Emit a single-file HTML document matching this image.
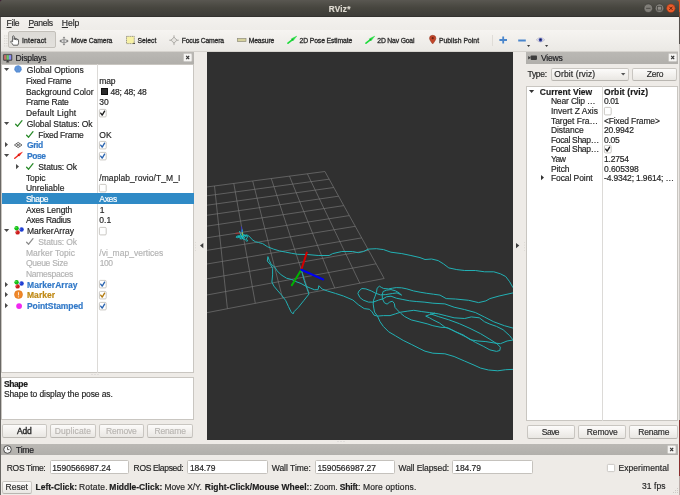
<!DOCTYPE html>
<html><head><meta charset="utf-8"><title>RViz*</title><style>html,body{margin:0;padding:0}body{width:680px;height:495px;overflow:hidden;position:relative;background:#f0eeeb;font-family:"Liberation Sans", sans-serif;-webkit-text-stroke:0.18px}u{text-decoration-thickness:.6px;text-underline-offset:1px}#all{position:absolute;left:0;top:0;width:680px;height:495px;overflow:hidden;filter:blur(0.4px)}</style></head><body><div id="all"><div style="position:absolute;left:670px;top:0px;width:10px;height:11.5px;background:#d9501e"></div><div style="position:absolute;left:670px;top:11.5px;width:10px;height:6px;background:#8a4a30"></div><div style="position:absolute;left:0px;top:0px;width:6px;height:6px;background:#3a1830"></div><div style="position:absolute;left:0px;top:0px;width:679.1px;height:17px;background:linear-gradient(#595751,#47463f 45%,#3c3b37);border-radius:2.5px 3px 0 0"></div><div style="position:absolute;left:0px;top:16.2px;width:679.1px;height:0.9px;background:#33322f"></div><svg width="40" height="17" viewBox="640 0 40 17" style="position:absolute;left:640px;top:0"><circle cx="648.3" cy="8.2" r="4.3" fill="#807e78" stroke="#3a3935" stroke-width="0.6"/><circle cx="659.5" cy="8.2" r="4.3" fill="#807e78" stroke="#3a3935" stroke-width="0.6"/><circle cx="670.9" cy="8.3" r="4.3" fill="#ec5c2c" stroke="#8a3414" stroke-width="0.6"/><path d="M646.1 8.3H650.5" stroke="#45443f" stroke-width="0.9"/><rect x="657.5" y="6.3" width="4" height="3.8" fill="#8f8d87" stroke="#45443f" stroke-width="0.75"/><path d="M669.3 6.7L672.5 9.9M672.5 6.7L669.3 9.9" stroke="#5a220c" stroke-width="1"/></svg><div style="position:absolute;left:0px;top:17.2px;width:680px;height:12.6px;background:linear-gradient(#f3f1ee,#eeece8)"></div><div style="position:absolute;left:0px;top:29.8px;width:680px;height:21.4px;background:linear-gradient(#f6f4f1,#ebe9e5)"></div><div style="position:absolute;left:0px;top:51.0px;width:680px;height:0.8px;background:#d6d3ce"></div><svg width="4" height="12" style="position:absolute;left:3.6px;top:34.5px" viewBox="0 0 4 12"><rect x="0.3" y="0.5" width="0.9" height="0.9" fill="#c9c6c0"/><rect x="0.3" y="3" width="0.9" height="0.9" fill="#c9c6c0"/><rect x="0.3" y="5.5" width="0.9" height="0.9" fill="#c9c6c0"/><rect x="0.3" y="8" width="0.9" height="0.9" fill="#c9c6c0"/><rect x="0.3" y="10.5" width="0.9" height="0.9" fill="#c9c6c0"/><rect x="2.4" y="0.5" width="0.9" height="0.9" fill="#c9c6c0"/><rect x="2.4" y="3" width="0.9" height="0.9" fill="#c9c6c0"/><rect x="2.4" y="5.5" width="0.9" height="0.9" fill="#c9c6c0"/><rect x="2.4" y="8" width="0.9" height="0.9" fill="#c9c6c0"/><rect x="2.4" y="10.5" width="0.9" height="0.9" fill="#c9c6c0"/></svg><div style="position:absolute;left:8.3px;top:31.2px;width:47.3px;height:16.8px;background:linear-gradient(#dddbd7,#e3e1dd);border:0.7px solid #c3c0ba;border-radius:2px;box-sizing:border-box"></div><svg width="10" height="11" viewBox="0 0 10 11" style="position:absolute;left:10px;top:34.5px;overflow:visible"><path d="M2.6 6.2V1.6Q2.6 .8 3.4 .8Q4.2 .8 4.2 1.6V4.6V3.6Q4.2 3 4.9 3Q5.6 3 5.6 3.7V4.8V4.2Q5.6 3.6 6.3 3.6Q7 3.6 7 4.3V5.2V4.8Q7 4.3 7.7 4.3Q8.5 4.3 8.5 5.2V7.6Q8.5 9 7.8 10.2H3.2Q2.4 8.6 1 7.4Q.4 6.6 1.1 6.2Q1.8 5.9 2.6 6.8Z" fill="#fff" stroke="#3a3a3a" stroke-width="0.8" stroke-linejoin="round"/></svg><svg width="10" height="10" viewBox="0 0 10 10" style="position:absolute;left:59px;top:35.6px;overflow:visible"><path d="M5 .5L6.4 2.2H3.6ZM5 9.5L3.6 7.8H6.4ZM.3 5L2 3.6V6.4ZM9.7 5L8 6.4V3.6Z" fill="#7a7a7a"/><path d="M5 2V8M2 5H8" stroke="#8a8a8a" stroke-width="0.7"/><rect x="2.4" y="3.7" width="5.2" height="2.8" rx="0.5" fill="#dcdcdc" stroke="#777" stroke-width="0.65"/><circle cx="5" cy="5.1" r=".8" fill="#888"/></svg><svg width="9" height="8.2" viewBox="0 0 9 8.2" style="position:absolute;left:126px;top:36.2px;overflow:visible"><rect x=".5" y=".4" width="7.8" height="7.2" fill="#f7f1a5" stroke="#77756a" stroke-width="0.7" stroke-dasharray="1.2 .6"/><rect x="7.4" y="6.8" width="1.3" height="1.2" fill="#222"/></svg><svg width="10" height="10.4" viewBox="0 0 10 10.4" style="position:absolute;left:169.2px;top:35px;overflow:visible"><path d="M5 .3V10.1M.2 5.2H9.8" stroke="#9c9a96" stroke-width="0.8"/><path d="M5 2.2L8 5.2L5 8.2L2 5.2Z" fill="#e6e4e0" stroke="#9c9a96" stroke-width="0.8"/></svg><svg width="9.4" height="4" viewBox="0 0 9.4 4" style="position:absolute;left:236.6px;top:38.2px;overflow:visible"><rect x=".4" y=".4" width="8.6" height="3.2" fill="#d6d19c" stroke="#8f8d7c" stroke-width="0.7"/></svg><svg width="12" height="10" viewBox="0 0 12 10" style="position:absolute;left:286px;top:35px;overflow:visible"><path d="M2 8.2L6.2 4.8" stroke="#1fdc3c" stroke-width="1.7" stroke-linecap="round"/><path d="M7.05 5.85L5.35 3.75L10.8 1.1Z" fill="#1fdc3c" stroke="#1fdc3c" stroke-width=".4" stroke-linejoin="round"/><circle cx="6.3" cy="4.75" r=".8" fill="#11a82c"/></svg><svg width="12" height="10" viewBox="0 0 12 10" style="position:absolute;left:364px;top:35px;overflow:visible"><path d="M2 8.2L6.2 4.8" stroke="#1fdc3c" stroke-width="1.7" stroke-linecap="round"/><path d="M7.05 5.85L5.35 3.75L10.8 1.1Z" fill="#1fdc3c" stroke="#1fdc3c" stroke-width=".4" stroke-linejoin="round"/><circle cx="6.3" cy="4.75" r=".8" fill="#11a82c"/></svg><svg width="7.4" height="9.2" viewBox="0 0 7.4 9.2" style="position:absolute;left:428.6px;top:35.2px;overflow:visible"><path d="M3.7 9C3.7 9 .5 5.2 .5 3.3A3.2 3 0 0 1 6.9 3.3C6.9 5.2 3.7 9 3.7 9Z" fill="#c2452a" stroke="#8e2e18" stroke-width="0.5"/><circle cx="3.7" cy="3.2" r="1.1" fill="#6e2414"/></svg><div style="position:absolute;left:491.5px;top:35px;width:0.8px;height:10.6px;background:#dfdcd7"></div><svg width="8.6" height="8" viewBox="0 0 8.6 8" style="position:absolute;left:499px;top:36.3px;overflow:visible"><path d="M4.2 .4V7.6M.4 4H8" stroke="#4a86cc" stroke-width="1.8"/></svg><svg width="8" height="3" viewBox="0 0 8 3" style="position:absolute;left:517.8px;top:38.6px;overflow:visible"><path d="M.2 1.5H7.8" stroke="#4a86cc" stroke-width="2.0"/></svg><svg width="3.4" height="2.2" viewBox="0 0 3.4 2.2" style="position:absolute;left:526.6px;top:45px;overflow:visible"><path d="M0 0H3.2L1.6 2Z" fill="#3a3a3a"/></svg><svg width="9" height="5.6" viewBox="0 0 9 5.6" style="position:absolute;left:536px;top:37.4px;overflow:visible"><path d="M.3 2.8Q4.5 -1.6 8.7 2.8Q4.5 7.2 .3 2.8Z" fill="#e9e8f2" stroke="#a9a8b8" stroke-width="0.6"/><circle cx="4.5" cy="2.8" r="1.9" fill="#3c4aa8"/><circle cx="4.5" cy="2.8" r=".8" fill="#15183a"/></svg><svg width="3.4" height="2.2" viewBox="0 0 3.4 2.2" style="position:absolute;left:545.1px;top:45px;overflow:visible"><path d="M0 0H3.2L1.6 2Z" fill="#3a3a3a"/></svg><div style="position:absolute;left:0px;top:51.8px;width:680px;height:443.2px;background:#eeebe7"></div><div style="position:absolute;left:0px;top:17px;width:0.6px;height:478px;background:#6a6865"></div><div style="position:absolute;left:1px;top:51.5px;width:192.8px;height:12.1px;background:linear-gradient(#bab8b4,#b1afab)"></div><svg width="9.4" height="8.8" viewBox="0 0 9.4 8.8" style="position:absolute;left:3.2px;top:53.6px;overflow:visible"><rect x=".4" y=".4" width="8.6" height="6" rx=".6" fill="#444" stroke="#333" stroke-width=".5"/><rect x="1.1" y="1.1" width="2.4" height="4.6" fill="#c86a6a"/><rect x="3.5" y="1.1" width="2.4" height="4.6" fill="#6ac86a"/><rect x="5.9" y="1.1" width="2.4" height="4.6" fill="#8c8cf0"/><path d="M3.2 7.9H6.2M4.7 6.6V7.8" stroke="#222" stroke-width=".9"/></svg><svg width="9.4" height="9" viewBox="0 0 9.4 9" style="position:absolute;left:183.4px;top:52.599999999999994px;overflow:visible"><rect x=".35" y=".35" width="8.7" height="8.3" rx="1.3" fill="#f5f4f2" stroke="#bcb9b4" stroke-width=".7"/><path d="M3.2 2.9L6.2 6.1M6.2 2.9L3.2 6.1" stroke="#333" stroke-width="1.15"/></svg><div style="position:absolute;left:1.2px;top:63.7px;width:192.60000000000002px;height:309.3px;background:#fff;border:0.6px solid #c9c6c1;box-sizing:border-box"></div><div style="position:absolute;left:97.3px;top:63.7px;width:0.7px;height:309.3px;background:#dcdad7"></div><div style="position:absolute;left:1.5px;top:193.4px;width:192px;height:10.6px;background:#2f8ac6"></div><svg width="5.2" height="3.2" viewBox="0 0 5.2 3.2" style="position:absolute;left:3.6999999999999997px;top:68.31px;overflow:visible"><path d="M0 0H5.2L2.6 3.1Z" fill="#4a4a4a"/></svg><svg width="8" height="8" viewBox="0 0 8 8" style="position:absolute;left:14.3px;top:65.21px;overflow:visible"><circle cx="4" cy="4" r="3.35" fill="#5d92d8" stroke="#4d84cc" stroke-width=".9" stroke-dasharray="1.05 .5"/><circle cx="4" cy="4" r="2.1" fill="#78a8e4"/><path d="M1.9 4H6.1M4 1.9V6.1M2.5 3H5.5M2.5 5H5.5" stroke="#4178c0" stroke-width=".4"/></svg><div style="position:absolute;left:100.6px;top:88.25px;width:7px;height:6.6px;background:#2c2c2c;border:.5px solid #111;box-sizing:border-box"></div><svg width="7.6" height="8.3" viewBox="0 0 7.6 8.3" style="position:absolute;left:99.10000000000001px;top:108.78999999999999px;overflow:visible"><rect x=".4" y=".4" width="6.8" height="7.5" rx="1" fill="#fff" stroke="#bdbab5" stroke-width=".8"/><path d="M1.7 4.1L3.2 6.1L5.6 2.1" fill="none" stroke="#1c1c1c" stroke-width="1.35" stroke-linecap="round" stroke-linejoin="round"/></svg><svg width="5.2" height="3.2" viewBox="0 0 5.2 3.2" style="position:absolute;left:3.6999999999999997px;top:121.91px;overflow:visible"><path d="M0 0H5.2L2.6 3.1Z" fill="#4a4a4a"/></svg><svg width="7.6" height="7" viewBox="0 0 7.6 7" style="position:absolute;left:15px;top:120.11px;overflow:visible"><path d="M.6 4.2L2.6 6.2L7 .7" fill="none" stroke="#2a8a2a" stroke-width="1.3" stroke-linecap="round" stroke-linejoin="round"/></svg><svg width="7.6" height="7" viewBox="0 0 7.6 7" style="position:absolute;left:26.2px;top:130.83px;overflow:visible"><path d="M.6 4.2L2.6 6.2L7 .7" fill="none" stroke="#2a8a2a" stroke-width="1.3" stroke-linecap="round" stroke-linejoin="round"/></svg><svg width="3.2" height="5.2" viewBox="0 0 3.2 5.2" style="position:absolute;left:5.1px;top:142.25000000000003px;overflow:visible"><path d="M0 0V5.2L3 2.6Z" fill="#4a4a4a"/></svg><svg width="8.4" height="6" viewBox="0 0 8.4 6" style="position:absolute;left:14.4px;top:142.15000000000003px;overflow:visible"><path d="M4.2 .4L8 3L4.2 5.6L.4 3Z" fill="#f4f4f4" stroke="#3c3c3c" stroke-width=".75"/><path d="M2.3 1.7L6.1 4.3M6.1 1.7L2.3 4.3" stroke="#3c3c3c" stroke-width=".65"/></svg><svg width="7.6" height="8.3" viewBox="0 0 7.6 8.3" style="position:absolute;left:99.10000000000001px;top:140.95000000000005px;overflow:visible"><rect x=".4" y=".4" width="6.8" height="7.5" rx="1" fill="#fff" stroke="#bdbab5" stroke-width=".8"/><path d="M1.7 4.1L3.2 6.1L5.6 2.1" fill="none" stroke="#2a64b0" stroke-width="1.35" stroke-linecap="round" stroke-linejoin="round"/></svg><svg width="5.2" height="3.2" viewBox="0 0 5.2 3.2" style="position:absolute;left:3.6999999999999997px;top:154.07000000000002px;overflow:visible"><path d="M0 0H5.2L2.6 3.1Z" fill="#4a4a4a"/></svg><svg width="10.6" height="8.8" viewBox="0 0 12 10" style="position:absolute;left:12.8px;top:150.67000000000002px;overflow:visible"><path d="M2 8.2L6.2 4.8" stroke="#f0281e" stroke-width="1.7" stroke-linecap="round"/><path d="M7.05 5.85L5.35 3.75L10.8 1.1Z" fill="#f0281e" stroke="#f0281e" stroke-width=".4" stroke-linejoin="round"/><circle cx="6.3" cy="4.75" r=".8" fill="#b4160e"/></svg><svg width="7.6" height="8.3" viewBox="0 0 7.6 8.3" style="position:absolute;left:99.10000000000001px;top:151.67000000000002px;overflow:visible"><rect x=".4" y=".4" width="6.8" height="7.5" rx="1" fill="#fff" stroke="#bdbab5" stroke-width=".8"/><path d="M1.7 4.1L3.2 6.1L5.6 2.1" fill="none" stroke="#2a64b0" stroke-width="1.35" stroke-linecap="round" stroke-linejoin="round"/></svg><svg width="3.2" height="5.2" viewBox="0 0 3.2 5.2" style="position:absolute;left:16.3px;top:163.69000000000003px;overflow:visible"><path d="M0 0V5.2L3 2.6Z" fill="#4a4a4a"/></svg><svg width="7.6" height="7" viewBox="0 0 7.6 7" style="position:absolute;left:26.2px;top:162.99000000000004px;overflow:visible"><path d="M.6 4.2L2.6 6.2L7 .7" fill="none" stroke="#2a8a2a" stroke-width="1.3" stroke-linecap="round" stroke-linejoin="round"/></svg><svg width="7.6" height="8.3" viewBox="0 0 7.6 8.3" style="position:absolute;left:99.10000000000001px;top:183.83000000000004px;overflow:visible"><rect x=".4" y=".4" width="6.8" height="7.5" rx="1" fill="#fff" stroke="#bdbab5" stroke-width=".8"/></svg><svg width="5.2" height="3.2" viewBox="0 0 5.2 3.2" style="position:absolute;left:3.6999999999999997px;top:229.11000000000004px;overflow:visible"><path d="M0 0H5.2L2.6 3.1Z" fill="#4a4a4a"/></svg><svg width="9.4" height="8.8" viewBox="0 0 9.4 8.8" style="position:absolute;left:13.6px;top:225.91000000000003px;overflow:visible"><circle cx="2.6" cy="2.3" r="2.2" fill="#12c012"/><circle cx="3.6" cy="6.4" r="2.2" fill="#cc1a1a"/><circle cx="7.6" cy="3.5" r="2.2" fill="#1e3ed2"/><circle cx="2" cy="1.7" r=".6" fill="#9f9" opacity=".8"/><circle cx="6.6" cy="3" r=".6" fill="#99f" opacity=".8"/><circle cx="2.7" cy="5.8" r=".6" fill="#f99" opacity=".8"/></svg><svg width="7.6" height="8.3" viewBox="0 0 7.6 8.3" style="position:absolute;left:99.10000000000001px;top:226.71000000000004px;overflow:visible"><rect x=".4" y=".4" width="6.8" height="7.5" rx="1" fill="#fff" stroke="#bdbab5" stroke-width=".8"/></svg><svg width="7.6" height="7" viewBox="0 0 7.6 7" style="position:absolute;left:26.2px;top:238.03000000000003px;overflow:visible"><path d="M.6 4.2L2.6 6.2L7 .7" fill="none" stroke="#8e8e8e" stroke-width="1.3" stroke-linecap="round" stroke-linejoin="round"/></svg><svg width="3.2" height="5.2" viewBox="0 0 3.2 5.2" style="position:absolute;left:5.1px;top:281.61px;overflow:visible"><path d="M0 0V5.2L3 2.6Z" fill="#4a4a4a"/></svg><svg width="9.4" height="8.8" viewBox="0 0 9.4 8.8" style="position:absolute;left:13.6px;top:279.51px;overflow:visible"><circle cx="2.6" cy="2.3" r="2.2" fill="#12c012"/><circle cx="3.6" cy="6.4" r="2.2" fill="#cc1a1a"/><circle cx="7.6" cy="3.5" r="2.2" fill="#1e3ed2"/><circle cx="2" cy="1.7" r=".6" fill="#9f9" opacity=".8"/><circle cx="6.6" cy="3" r=".6" fill="#99f" opacity=".8"/><circle cx="2.7" cy="5.8" r=".6" fill="#f99" opacity=".8"/></svg><svg width="7.6" height="8.3" viewBox="0 0 7.6 8.3" style="position:absolute;left:99.10000000000001px;top:280.31px;overflow:visible"><rect x=".4" y=".4" width="6.8" height="7.5" rx="1" fill="#fff" stroke="#bdbab5" stroke-width=".8"/><path d="M1.7 4.1L3.2 6.1L5.6 2.1" fill="none" stroke="#2a64b0" stroke-width="1.35" stroke-linecap="round" stroke-linejoin="round"/></svg><svg width="3.2" height="5.2" viewBox="0 0 3.2 5.2" style="position:absolute;left:5.1px;top:292.33000000000004px;overflow:visible"><path d="M0 0V5.2L3 2.6Z" fill="#4a4a4a"/></svg><svg width="9" height="9" viewBox="0 0 9 9" style="position:absolute;left:13.8px;top:290.13px;overflow:visible"><circle cx="4.5" cy="4.5" r="4.0" fill="#f0882a" stroke="#dc7418" stroke-width=".6"/><path d="M4.5 2.6V5" stroke="#fde8cf" stroke-width="1.0" stroke-linecap="round"/><circle cx="4.5" cy="6.8" r=".6" fill="#fde8cf"/></svg><svg width="7.6" height="8.3" viewBox="0 0 7.6 8.3" style="position:absolute;left:99.10000000000001px;top:291.03000000000003px;overflow:visible"><rect x=".4" y=".4" width="6.8" height="7.5" rx="1" fill="#fff" stroke="#bdbab5" stroke-width=".8"/><path d="M1.7 4.1L3.2 6.1L5.6 2.1" fill="none" stroke="#b27a10" stroke-width="1.35" stroke-linecap="round" stroke-linejoin="round"/></svg><svg width="3.2" height="5.2" viewBox="0 0 3.2 5.2" style="position:absolute;left:5.1px;top:303.05000000000007px;overflow:visible"><path d="M0 0V5.2L3 2.6Z" fill="#4a4a4a"/></svg><svg width="6.2" height="6.2" viewBox="0 0 6.2 6.2" style="position:absolute;left:15.5px;top:302.55000000000007px;overflow:visible"><circle cx="3.1" cy="3.1" r="2.9" fill="#f028f0"/></svg><svg width="7.6" height="8.3" viewBox="0 0 7.6 8.3" style="position:absolute;left:99.10000000000001px;top:301.75000000000006px;overflow:visible"><rect x=".4" y=".4" width="6.8" height="7.5" rx="1" fill="#fff" stroke="#bdbab5" stroke-width=".8"/><path d="M1.7 4.1L3.2 6.1L5.6 2.1" fill="none" stroke="#2a64b0" stroke-width="1.35" stroke-linecap="round" stroke-linejoin="round"/></svg><svg width="10" height="1.4" viewBox="0 0 10 1.4" style="position:absolute;left:91px;top:374.4px;overflow:visible"><circle cx="1" cy=".6" r=".5" fill="#bbb"/><circle cx="4" cy=".6" r=".5" fill="#bbb"/><circle cx="7" cy=".6" r=".5" fill="#bbb"/></svg><div style="position:absolute;left:1.2px;top:376.5px;width:192.6px;height:43.3px;background:#fff;border:0.6px solid #c9c6c1;box-sizing:border-box"></div><div style="position:absolute;left:1.7000000000000002px;top:424.1px;width:45.099999999999994px;height:13.8px;background:linear-gradient(#fcfbfa,#f1efec 60%,#e9e7e3);border:0.8px solid #c9c6c1;border-bottom-color:#b9b6b1;border-radius:2.2px;box-sizing:border-box"></div><div style="position:absolute;left:50.2px;top:424.1px;width:45.5px;height:13.8px;background:linear-gradient(#fcfbfa,#f1efec 60%,#e9e7e3);border:0.8px solid #c9c6c1;border-bottom-color:#b9b6b1;border-radius:2.2px;box-sizing:border-box"></div><div style="position:absolute;left:99.0px;top:424.1px;width:45.0px;height:13.8px;background:linear-gradient(#fcfbfa,#f1efec 60%,#e9e7e3);border:0.8px solid #c9c6c1;border-bottom-color:#b9b6b1;border-radius:2.2px;box-sizing:border-box"></div><div style="position:absolute;left:147.2px;top:424.1px;width:45.599999999999994px;height:13.8px;background:linear-gradient(#fcfbfa,#f1efec 60%,#e9e7e3);border:0.8px solid #c9c6c1;border-bottom-color:#b9b6b1;border-radius:2.2px;box-sizing:border-box"></div><div style="position:absolute;left:206.5px;top:51.55px;width:306.4px;height:388.35px;background:#303030;overflow:hidden"><div style="position:absolute;left:0.5px;top:0.45px"><svg width="306" height="388" viewBox="0 0 306 388" style="position:absolute;left:0;top:0"><path d="M117.9 119.5L177.2 226.5M117.9 119.5L-73.6 144.6M100.4 121.8L152.8 231.2M122.2 127.2L-75.4 154.0M82.5 124.2L127.7 236.0M126.8 135.5L-77.3 164.0M64.3 126.6L102.0 241.0M131.6 144.2L-79.4 174.8M45.7 129.0L75.5 246.1M136.8 153.6L-81.7 186.4M26.8 131.5L48.3 251.3M142.3 163.6L-84.1 198.9M7.5 134.0L20.4 256.7M148.3 174.3L-86.7 212.4M-12.2 136.6L-8.4 262.3M154.7 185.9L-89.6 227.1M-32.2 139.2L-37.9 268.0M161.6 198.3L-92.7 243.2M-52.7 141.9L-68.4 273.9M169.1 211.8L-96.1 260.7M-73.6 144.6L-99.8 279.9M177.2 226.5L-99.8 279.9" stroke="#7a7a7a" stroke-width="0.65" fill="none"/><path d="M41.2 183.6L43.2 185.2L45.2 187.7L48.3 189.7L51.5 190.5L55.6 191.6L60.4 194.7L66.5 197.1L72.5 198.9L78.6 200.1L84.7 201.3L90.7 202.3L100.3 202.5L111.2 203.5L122.1 203.5L125.7 201.6L134.8 199.5L145.7 199.5L151.2 200.7L156.6 199.5L161.2 197.1L169.4 196.7L176.6 197.6L183.9 200.2L194.8 201.6L203.9 203.5L213.0 205.6L218.0 207.5L224.6 207.0L231.2 208.6L236.5 211.9L241.8 215.9L249.8 217.6L257.7 218.5L268.3 218.5L277.6 219.8L286.8 219.8L293.4 221.8L298.7 224.5L302.7 229.8L306.0 235.7M60.9 204.6L60.3 209.0L63.6 212.9L65.6 216.2L65.6 222.9L64.9 230.1L66.9 234.1L70.2 238.1L74.8 243.4L78.8 248.7L81.5 254.6L84.1 259.9L86.1 261.9L87.1 259.6L91.4 255.3L96.7 248.7L102.0 242.0L100.0 236.7L97.3 228.8L95.3 221.5L94.3 217.8M60.9 204.6L62.3 208.3L64.2 212.3L67.6 214.9L70.2 218.9L74.2 222.9L79.5 226.2L84.8 227.5L88.7 229.5L94.0 231.5L98.7 234.1L103.3 236.1L107.3 237.7L111.0 237.7L111.9 233.7L115.2 237.1L120.5 239.0L128.4 241.4L136.4 244.0L145.9 248.0L151.2 252.6L157.2 256.6L162.5 257.3L165.1 259.9L167.1 263.2L170.4 264.1L176.4 263.6L183.0 263.6L188.3 261.9L193.6 260.2L200.2 259.2L206.8 258.3L214.8 259.6L222.7 260.6L231.2 261.8L239.2 263.8L247.1 265.8L257.7 266.5L264.3 264.9L272.3 265.8L277.6 269.8L282.9 272.1L289.5 274.4L296.1 277.7L302.7 283.7L306.0 287.9M228.0 261.0L222.7 262.6L218.7 264.1L222.7 265.9L225.9 267.8L232.6 271.1L237.9 275.1L244.5 277.7L252.4 281.7L261.7 286.3L268.3 290.3L276.2 294.2L282.9 297.9L289.5 299.4L292.8 298.5L293.4 295.2L290.1 291.9L282.9 287.3L273.6 281.7L263.0 276.4L252.4 271.7L241.8 267.8L231.2 264.5L223.3 261.8M194.6 243.1L192.6 242.2L190.0 240.9L185.4 241.5L178.7 242.6L173.4 242.9L168.8 241.3L164.2 238.9L158.9 236.9L154.9 236.5L152.0 238.9L150.9 241.5L152.9 245.5L156.2 248.1L161.5 250.1L166.2 250.1L171.5 248.1L176.1 246.8L179.4 244.8L184.0 244.2L189.3 246.2L195.9 247.5L202.6 248.8L209.2 249.5L217.1 250.1L225.9 251.2L237.9 251.9L247.1 255.2L257.7 257.6L268.3 260.5L277.6 265.1L286.8 269.8L297.4 273.7L306.0 276.1M194.6 243.1L192.0 240.9L188.7 238.9L184.0 237.6L179.4 238.2L176.1 239.5L175.2 242.9L175.4 246.8L177.4 250.8L180.1 252.1L182.7 250.1L185.4 249.2L187.3 251.5L188.0 255.4L190.3 257.9L193.6 261.2L197.6 264.5L204.2 267.9L212.1 269.8L220.1 271.8L225.9 273.7L233.9 275.3L240.5 275.7L248.4 279.7L256.4 283.0L263.0 287.6L270.9 289.0L278.9 289.6L286.8 290.9L293.4 291.7L300.1 289.0L306.0 288.0M172.4 234.2L170.1 236.2L169.5 240.2L168.1 244.2L166.6 248.1L166.2 252.1L166.8 256.1L167.5 260.1L170.4 263.9L173.1 269.8L176.4 274.5L181.7 279.8L188.3 283.7L196.2 288.4L204.2 292.3L212.1 296.3L218.0 299.2L225.9 301.2L237.9 301.8L247.1 304.5L257.7 309.1L267.0 313.1L273.6 316.1L281.5 318.0L290.8 318.8L298.7 317.7L306.0 317.4M172.4 234.2L174.8 235.6L176.7 236.5L181.4 236.9L185.4 236.2L189.3 235.6L194.6 235.8L199.9 236.9L206.5 238.9L213.1 240.2L219.8 241.3L226.4 242.2L233.0 243.1L239.2 246.6L248.4 247.0L261.7 248.3L271.6 250.6L278.9 248.9L282.9 246.6L292.1 244.0L306.0 240.9" stroke="#22b0b4" stroke-width="1" fill="none" stroke-linejoin="round"/><path d="M41.2 183.6L39.7 182.9L38.2 183.2L36.6 182.6L35.6 181.6L35.4 179.6L35.1 177.6L34.9 179.6L34.4 181.6L33.4 180.6L32.6 179.3L33.1 181.4L33.9 183.1L32.6 183.6L31.1 183.9L29.6 184.4L29.1 185.2L30.3 185.7L31.8 185.4L33.1 185.2L33.9 186.2L32.8 186.7L34.6 186.9L35.9 186.4L35.6 184.9L36.6 184.6L37.6 185.2L37.1 186.2L36.4 187.2L38.2 187.4L38.9 188.4L39.7 189.4L40.7 188.7L39.9 187.7L39.2 186.9L40.2 185.7L40.7 184.6L39.7 184.1L38.2 184.4L37.4 183.6L36.2 183.9L35.9 185.2L35.1 185.7L34.4 184.6L34.9 183.4M30.6 184.6L32.1 184.4L33.6 184.6L35.1 184.1L36.6 183.9L38.2 183.6L39.7 183.5M33.4 180.9L33.9 182.6L34.4 184.1L35.1 186.2L36.2 187.2" stroke="#14c6ca" stroke-width="0.9" fill="none" stroke-linejoin="round"/><path d="M34.4 174.5L35.1 180.6" stroke="#3030d0" stroke-width="0.8"/><path d="M28.3 181.4L34.9 180.9" stroke="#c03030" stroke-width="0.8"/><path d="M35.4 180.1L35.6 183.6" stroke="#90d060" stroke-width="0.8"/><path d="M94.3 217.8L99.8 200.6" stroke="#d40000" stroke-width="2" stroke-linecap="round"/><path d="M94.3 217.8L84.8 233.2" stroke="#00b400" stroke-width="2" stroke-linecap="round"/><path d="M94.3 217.8L116.2 227.4" stroke="#0000f0" stroke-width="2.2" stroke-linecap="round"/></svg></div></div><svg width="3.4" height="5.2" viewBox="0 0 3.4 5.2" style="position:absolute;left:199.9px;top:242.9px;overflow:visible"><path d="M3.3 0V5.2L0 2.6Z" fill="#3c3c3c"/></svg><svg width="3.4" height="5.2" viewBox="0 0 3.4 5.2" style="position:absolute;left:515.8px;top:242.9px;overflow:visible"><path d="M0 0V5.2L3.3 2.6Z" fill="#3c3c3c"/></svg><svg width="1" height="9" viewBox="0 0 1 9" style="position:absolute;left:195.1px;top:242.4px;overflow:visible"><rect x="0" y="0" width=".8" height=".8" fill="#d5d2cd"/><rect x="0" y="2.7" width=".8" height=".8" fill="#d5d2cd"/><rect x="0" y="5.4" width=".8" height=".8" fill="#d5d2cd"/><rect x="0" y="8.1" width=".8" height=".8" fill="#d5d2cd"/></svg><svg width="1" height="9" viewBox="0 0 1 9" style="position:absolute;left:523.8px;top:242.4px;overflow:visible"><rect x="0" y="0" width=".8" height=".8" fill="#d5d2cd"/><rect x="0" y="2.7" width=".8" height=".8" fill="#d5d2cd"/><rect x="0" y="5.4" width=".8" height=".8" fill="#d5d2cd"/><rect x="0" y="8.1" width=".8" height=".8" fill="#d5d2cd"/></svg><svg width="10" height="1.4" viewBox="0 0 10 1.4" style="position:absolute;left:336.5px;top:441.2px;overflow:visible"><circle cx="1" cy=".6" r=".5" fill="#bbb"/><circle cx="4" cy=".6" r=".5" fill="#bbb"/><circle cx="7" cy=".6" r=".5" fill="#bbb"/></svg><div style="position:absolute;left:526px;top:51.5px;width:154px;height:12.1px;background:linear-gradient(#bab8b4,#b1afab)"></div><svg width="9.4" height="5.4" viewBox="0 0 9.4 5.4" style="position:absolute;left:528.2px;top:55.4px;overflow:visible"><rect x="2.6" y=".5" width="6.4" height="4.4" rx=".8" fill="#3c3c3c"/><path d="M.2 .9L2.8 2.7L.2 4.5Z" fill="#3c3c3c"/></svg><svg width="9.4" height="9" viewBox="0 0 9.4 9" style="position:absolute;left:667.6999999999999px;top:52.699999999999996px;overflow:visible"><rect x=".35" y=".35" width="8.7" height="8.3" rx="1.3" fill="#f5f4f2" stroke="#bcb9b4" stroke-width=".7"/><path d="M3.2 2.9L6.2 6.1M6.2 2.9L3.2 6.1" stroke="#333" stroke-width="1.15"/></svg><div style="position:absolute;left:551.0px;top:67.7px;width:77.7px;height:13.6px;background:linear-gradient(#fcfbfa,#f1efec 60%,#e9e7e3);border:0.8px solid #c9c6c1;border-bottom-color:#b9b6b1;border-radius:2.2px;box-sizing:border-box"></div><svg width="4.6" height="2.8" viewBox="0 0 4.6 2.8" style="position:absolute;left:620.8px;top:73.4px;overflow:visible"><path d="M0 0H4.4L2.2 2.6Z" fill="#555"/></svg><div style="position:absolute;left:632.3000000000001px;top:67.69999999999999px;width:45.199999999999996px;height:13.6px;background:linear-gradient(#fcfbfa,#f1efec 60%,#e9e7e3);border:0.8px solid #c9c6c1;border-bottom-color:#b9b6b1;border-radius:2.2px;box-sizing:border-box"></div><div style="position:absolute;left:526px;top:85.6px;width:152.4px;height:335.6px;background:#fff;border:0.6px solid #c9c6c1;box-sizing:border-box"></div><div style="position:absolute;left:601.9px;top:85.6px;width:0.7px;height:335.6px;background:#dcdad7"></div><svg width="5.2" height="3.2" viewBox="0 0 5.2 3.2" style="position:absolute;left:529.1999999999999px;top:89.7px;overflow:visible"><path d="M0 0H5.2L2.6 3.1Z" fill="#333"/></svg><svg width="7.6" height="8.3" viewBox="0 0 7.6 8.3" style="position:absolute;left:603.9px;top:106.58px;overflow:visible"><rect x=".4" y=".4" width="6.8" height="7.5" rx="1" fill="#fff" stroke="#bdbab5" stroke-width=".8"/></svg><svg width="7.6" height="8.3" viewBox="0 0 7.6 8.3" style="position:absolute;left:603.9px;top:144.94px;overflow:visible"><rect x=".4" y=".4" width="6.8" height="7.5" rx="1" fill="#fff" stroke="#bdbab5" stroke-width=".8"/><path d="M1.7 4.1L3.2 6.1L5.6 2.1" fill="none" stroke="#1c1c1c" stroke-width="1.35" stroke-linecap="round" stroke-linejoin="round"/></svg><svg width="3.2" height="5.2" viewBox="0 0 3.2 5.2" style="position:absolute;left:541.3000000000001px;top:175.01px;overflow:visible"><path d="M0 0V5.2L3 2.6Z" fill="#333"/></svg><div style="position:absolute;left:526.6px;top:425.3px;width:48.199999999999996px;height:13.6px;background:linear-gradient(#fcfbfa,#f1efec 60%,#e9e7e3);border:0.8px solid #c9c6c1;border-bottom-color:#b9b6b1;border-radius:2.2px;box-sizing:border-box"></div><div style="position:absolute;left:577.9px;top:425.3px;width:48.5px;height:13.6px;background:linear-gradient(#fcfbfa,#f1efec 60%,#e9e7e3);border:0.8px solid #c9c6c1;border-bottom-color:#b9b6b1;border-radius:2.2px;box-sizing:border-box"></div><div style="position:absolute;left:629.3000000000001px;top:425.3px;width:48.4px;height:13.6px;background:linear-gradient(#fcfbfa,#f1efec 60%,#e9e7e3);border:0.8px solid #c9c6c1;border-bottom-color:#b9b6b1;border-radius:2.2px;box-sizing:border-box"></div><div style="position:absolute;left:1px;top:443.9px;width:679px;height:11.3px;background:linear-gradient(#bab8b4,#b1afab)"></div><svg width="9" height="9" viewBox="0 0 9 9" style="position:absolute;left:3px;top:445.4px;overflow:visible"><circle cx="4.5" cy="4.5" r="3.8" fill="#f4f4f4" stroke="#3c3c3c" stroke-width=".9"/><path d="M4.5 2.2V4.6H6.4" stroke="#333" stroke-width=".8" fill="none"/></svg><svg width="9.4" height="9" viewBox="0 0 9.4 9" style="position:absolute;left:667.4px;top:445.2px;overflow:visible"><rect x=".35" y=".35" width="8.7" height="8.3" rx="1.3" fill="#f5f4f2" stroke="#bcb9b4" stroke-width=".7"/><path d="M3.2 2.9L6.2 6.1M6.2 2.9L3.2 6.1" stroke="#333" stroke-width="1.15"/></svg><div style="position:absolute;left:50px;top:460.3px;width:79.3px;height:13.4px;background:#fff;border:0.7px solid #c5c2bd;border-radius:1.5px;box-sizing:border-box"></div><div style="position:absolute;left:187.2px;top:460.3px;width:80.4px;height:13.4px;background:#fff;border:0.7px solid #c5c2bd;border-radius:1.5px;box-sizing:border-box"></div><div style="position:absolute;left:315px;top:460.3px;width:79.6px;height:13.4px;background:#fff;border:0.7px solid #c5c2bd;border-radius:1.5px;box-sizing:border-box"></div><div style="position:absolute;left:452px;top:460.3px;width:80.6px;height:13.4px;background:#fff;border:0.7px solid #c5c2bd;border-radius:1.5px;box-sizing:border-box"></div><svg width="8" height="8" viewBox="0 0 8 8" style="position:absolute;left:607.3px;top:463.6px;overflow:visible"><rect x=".4" y=".4" width="7.2" height="7.2" rx="1" fill="#fff" stroke="#b9b6b1" stroke-width=".7"/></svg><div style="position:absolute;left:2.0px;top:480.8px;width:29.8px;height:13.0px;background:linear-gradient(#fcfbfa,#f1efec 60%,#e9e7e3);border:0.8px solid #c9c6c1;border-bottom-color:#b9b6b1;border-radius:2.2px;box-sizing:border-box"></div><svg width="7" height="7" viewBox="0 0 7 7" style="position:absolute;left:672px;top:487px;overflow:visible"><rect x="5" y="1" width=".9" height=".9" fill="#c6c3be"/><rect x="3" y="3" width=".9" height=".9" fill="#c6c3be"/><rect x="5" y="3" width=".9" height=".9" fill="#c6c3be"/><rect x="1" y="5" width=".9" height=".9" fill="#c6c3be"/><rect x="3" y="5" width=".9" height=".9" fill="#c6c3be"/><rect x="5" y="5" width=".9" height=".9" fill="#c6c3be"/></svg><div style="position:absolute;left:677.9px;top:17px;width:2.1px;height:478px;background:#eeebe7"></div><div style="position:absolute;left:678.9px;top:17px;width:1.1px;height:27px;background:#55504c"></div><div style="position:absolute;left:679.2px;top:44px;width:0.8px;height:376px;background:#cbc7c3"></div><div style="position:absolute;left:678.9px;top:420px;width:1.1px;height:56px;background:#8c2c2c"></div><div style="position:absolute;left:678.9px;top:476px;width:1.1px;height:19px;background:#bcaaa6"></div><span id="t0" style="position:absolute;left:328.80px;top:4px;line-height:12px;height:12px;font-size:8.2px;font-weight:700;color:#dfdbd2;white-space:nowrap;letter-spacing:0.240px;">RViz*</span><span id="t1" style="position:absolute;left:6.60px;top:17px;line-height:12px;height:12px;font-size:8.6px;font-weight:400;color:#2c2c2c;white-space:nowrap;letter-spacing:-0.286px;"><u>F</u>ile</span><span id="t2" style="position:absolute;left:28.40px;top:17px;line-height:12px;height:12px;font-size:8.6px;font-weight:400;color:#2c2c2c;white-space:nowrap;letter-spacing:-0.336px;"><u>P</u>anels</span><span id="t3" style="position:absolute;left:61.80px;top:17px;line-height:12px;height:12px;font-size:8.6px;font-weight:400;color:#2c2c2c;white-space:nowrap;letter-spacing:-0.029px;"><u>H</u>elp</span><span id="t4" style="position:absolute;left:21.90px;top:35px;line-height:12px;height:12px;font-size:6.8px;font-weight:400;color:#2c2c2c;white-space:nowrap;letter-spacing:0.233px;-webkit-text-stroke:0.3px;">Interact</span><span id="t5" style="position:absolute;left:70.90px;top:35px;line-height:12px;height:12px;font-size:6.8px;font-weight:400;color:#2c2c2c;white-space:nowrap;letter-spacing:-0.119px;-webkit-text-stroke:0.3px;">Move Camera</span><span id="t6" style="position:absolute;left:137.50px;top:35px;line-height:12px;height:12px;font-size:6.8px;font-weight:400;color:#2c2c2c;white-space:nowrap;letter-spacing:-0.018px;-webkit-text-stroke:0.3px;">Select</span><span id="t7" style="position:absolute;left:181.70px;top:35px;line-height:12px;height:12px;font-size:6.8px;font-weight:400;color:#2c2c2c;white-space:nowrap;letter-spacing:-0.207px;-webkit-text-stroke:0.3px;">Focus Camera</span><span id="t8" style="position:absolute;left:248.70px;top:35px;line-height:12px;height:12px;font-size:6.8px;font-weight:400;color:#2c2c2c;white-space:nowrap;letter-spacing:-0.142px;-webkit-text-stroke:0.3px;">Measure</span><span id="t9" style="position:absolute;left:299.50px;top:35px;line-height:12px;height:12px;font-size:6.8px;font-weight:400;color:#2c2c2c;white-space:nowrap;letter-spacing:-0.107px;-webkit-text-stroke:0.3px;">2D Pose Estimate</span><span id="t10" style="position:absolute;left:377.30px;top:35px;line-height:12px;height:12px;font-size:6.8px;font-weight:400;color:#2c2c2c;white-space:nowrap;letter-spacing:-0.172px;-webkit-text-stroke:0.3px;">2D Nav Goal</span><span id="t11" style="position:absolute;left:438.90px;top:35px;line-height:12px;height:12px;font-size:6.8px;font-weight:400;color:#2c2c2c;white-space:nowrap;letter-spacing:0.043px;-webkit-text-stroke:0.3px;">Publish Point</span><span id="t12" style="position:absolute;left:15.60px;top:52px;line-height:12px;height:12px;font-size:8.6px;font-weight:400;color:#1c1c20;white-space:nowrap;letter-spacing:-0.226px;">Displays</span><span id="t13" style="position:absolute;left:26.80px;top:64px;line-height:12px;height:12px;font-size:8.5px;font-weight:400;color:#262626;white-space:nowrap;letter-spacing:0.059px;">Global Options</span><span id="t14" style="position:absolute;left:25.90px;top:75px;line-height:12px;height:12px;font-size:8.5px;font-weight:400;color:#262626;white-space:nowrap;letter-spacing:-0.212px;">Fixed Frame</span><span id="t15" style="position:absolute;left:99.30px;top:75px;line-height:12px;height:12px;font-size:8.5px;font-weight:400;color:#262626;white-space:nowrap;letter-spacing:-0.123px;">map</span><span id="t16" style="position:absolute;left:25.90px;top:86px;line-height:12px;height:12px;font-size:8.5px;font-weight:400;color:#262626;white-space:nowrap;letter-spacing:-0.030px;">Background Color</span><span id="t17" style="position:absolute;left:110.40px;top:86px;line-height:12px;height:12px;font-size:8.5px;font-weight:400;color:#262626;white-space:nowrap;letter-spacing:-0.168px;">48; 48; 48</span><span id="t18" style="position:absolute;left:25.90px;top:96px;line-height:12px;height:12px;font-size:8.5px;font-weight:400;color:#262626;white-space:nowrap;letter-spacing:-0.219px;">Frame Rate</span><span id="t19" style="position:absolute;left:99.30px;top:96px;line-height:12px;height:12px;font-size:8.5px;font-weight:400;color:#262626;white-space:nowrap;letter-spacing:0.000px;">30</span><span id="t20" style="position:absolute;left:25.90px;top:107px;line-height:12px;height:12px;font-size:8.5px;font-weight:400;color:#262626;white-space:nowrap;letter-spacing:0.214px;">Default Light</span><span id="t21" style="position:absolute;left:26.80px;top:118px;line-height:12px;height:12px;font-size:8.5px;font-weight:400;color:#262626;white-space:nowrap;letter-spacing:-0.052px;">Global Status: Ok</span><span id="t22" style="position:absolute;left:38.30px;top:129px;line-height:12px;height:12px;font-size:8.5px;font-weight:400;color:#262626;white-space:nowrap;letter-spacing:-0.222px;">Fixed Frame</span><span id="t23" style="position:absolute;left:99.30px;top:129px;line-height:12px;height:12px;font-size:8.5px;font-weight:400;color:#262626;white-space:nowrap;letter-spacing:0.000px;">OK</span><span id="t24" style="position:absolute;left:27.00px;top:139px;line-height:12px;height:12px;font-size:8.5px;font-weight:700;color:#3279c8;white-space:nowrap;letter-spacing:-0.428px;">Grid</span><span id="t25" style="position:absolute;left:27.00px;top:150px;line-height:12px;height:12px;font-size:8.5px;font-weight:700;color:#3279c8;white-space:nowrap;letter-spacing:-0.476px;">Pose</span><span id="t26" style="position:absolute;left:38.30px;top:161px;line-height:12px;height:12px;font-size:8.5px;font-weight:400;color:#262626;white-space:nowrap;letter-spacing:-0.099px;">Status: Ok</span><span id="t27" style="position:absolute;left:25.90px;top:172px;line-height:12px;height:12px;font-size:8.5px;font-weight:400;color:#262626;white-space:nowrap;letter-spacing:-0.061px;">Topic</span><span id="t28" style="position:absolute;left:99.30px;top:172px;line-height:12px;height:12px;font-size:8.5px;font-weight:400;color:#262626;white-space:nowrap;letter-spacing:0.064px;">/maplab_rovio/T_M_I</span><span id="t29" style="position:absolute;left:25.90px;top:182px;line-height:12px;height:12px;font-size:8.5px;font-weight:400;color:#262626;white-space:nowrap;letter-spacing:0.024px;">Unreliable</span><span id="t30" style="position:absolute;left:25.90px;top:193px;line-height:12px;height:12px;font-size:8.5px;font-weight:400;color:#fff;white-space:nowrap;letter-spacing:-0.498px;">Shape</span><span id="t31" style="position:absolute;left:99.30px;top:193px;line-height:12px;height:12px;font-size:8.5px;font-weight:400;color:#fff;white-space:nowrap;letter-spacing:-0.302px;">Axes</span><span id="t32" style="position:absolute;left:25.90px;top:204px;line-height:12px;height:12px;font-size:8.5px;font-weight:400;color:#262626;white-space:nowrap;letter-spacing:-0.087px;">Axes Length</span><span id="t33" style="position:absolute;left:99.70px;top:204px;line-height:12px;height:12px;font-size:8.5px;font-weight:400;color:#262626;white-space:nowrap;letter-spacing:0.000px;">1</span><span id="t34" style="position:absolute;left:25.90px;top:214px;line-height:12px;height:12px;font-size:8.5px;font-weight:400;color:#262626;white-space:nowrap;letter-spacing:-0.252px;">Axes Radius</span><span id="t35" style="position:absolute;left:99.30px;top:214px;line-height:12px;height:12px;font-size:8.5px;font-weight:400;color:#262626;white-space:nowrap;letter-spacing:0.000px;">0.1</span><span id="t36" style="position:absolute;left:27.00px;top:225px;line-height:12px;height:12px;font-size:8.5px;font-weight:400;color:#262626;white-space:nowrap;letter-spacing:0.033px;">MarkerArray</span><span id="t37" style="position:absolute;left:38.30px;top:236px;line-height:12px;height:12px;font-size:8.5px;font-weight:400;color:#b4b4b4;white-space:nowrap;letter-spacing:-0.099px;">Status: Ok</span><span id="t38" style="position:absolute;left:25.90px;top:247px;line-height:12px;height:12px;font-size:8.5px;font-weight:400;color:#b4b4b4;white-space:nowrap;letter-spacing:0.055px;">Marker Topic</span><span id="t39" style="position:absolute;left:99.30px;top:247px;line-height:12px;height:12px;font-size:8.5px;font-weight:400;color:#b4b4b4;white-space:nowrap;letter-spacing:0.015px;">/vi_map_vertices</span><span id="t40" style="position:absolute;left:25.90px;top:257px;line-height:12px;height:12px;font-size:8.5px;font-weight:400;color:#b4b4b4;white-space:nowrap;letter-spacing:-0.269px;">Queue Size</span><span id="t41" style="position:absolute;left:99.70px;top:257px;line-height:12px;height:12px;font-size:8.5px;font-weight:400;color:#b4b4b4;white-space:nowrap;letter-spacing:-0.494px;">100</span><span id="t42" style="position:absolute;left:25.90px;top:268px;line-height:12px;height:12px;font-size:8.5px;font-weight:400;color:#b4b4b4;white-space:nowrap;letter-spacing:-0.257px;">Namespaces</span><span id="t43" style="position:absolute;left:27.00px;top:279px;line-height:12px;height:12px;font-size:8.5px;font-weight:700;color:#3279c8;white-space:nowrap;letter-spacing:0.051px;">MarkerArray</span><span id="t44" style="position:absolute;left:27.00px;top:289px;line-height:12px;height:12px;font-size:8.5px;font-weight:700;color:#c08a16;white-space:nowrap;letter-spacing:0.042px;">Marker</span><span id="t45" style="position:absolute;left:27.00px;top:300px;line-height:12px;height:12px;font-size:8.5px;font-weight:700;color:#3279c8;white-space:nowrap;letter-spacing:-0.078px;">PointStamped</span><span id="t46" style="position:absolute;left:3.90px;top:378px;line-height:12px;height:12px;font-size:8.5px;font-weight:700;color:#1c1c1c;white-space:nowrap;letter-spacing:-0.379px;">Shape</span><span id="t47" style="position:absolute;left:3.90px;top:388px;line-height:12px;height:12px;font-size:8.5px;font-weight:400;color:#262626;white-space:nowrap;letter-spacing:-0.090px;">Shape to display the pose as.</span><span id="t48" style="position:absolute;left:16.90px;top:425px;line-height:12px;height:12px;font-size:8.5px;font-weight:400;color:#2e2e2e;white-space:nowrap;letter-spacing:-0.112px;-webkit-text-stroke:0.4px;">Add</span><span id="t49" style="position:absolute;left:54.70px;top:425px;line-height:12px;height:12px;font-size:8.5px;font-weight:400;color:#b9b6b2;white-space:nowrap;letter-spacing:0.095px;">Duplicate</span><span id="t50" style="position:absolute;left:105.90px;top:425px;line-height:12px;height:12px;font-size:8.5px;font-weight:400;color:#b9b6b2;white-space:nowrap;letter-spacing:-0.151px;">Remove</span><span id="t51" style="position:absolute;left:154.40px;top:425px;line-height:12px;height:12px;font-size:8.5px;font-weight:400;color:#b9b6b2;white-space:nowrap;letter-spacing:-0.128px;">Rename</span><span id="t52" style="position:absolute;left:541.00px;top:52px;line-height:12px;height:12px;font-size:8.6px;font-weight:400;color:#1c1c20;white-space:nowrap;letter-spacing:-0.245px;">Views</span><span id="t53" style="position:absolute;left:527.60px;top:68px;line-height:12px;height:12px;font-size:8.5px;font-weight:400;color:#262626;white-space:nowrap;letter-spacing:-0.349px;">Type:</span><span id="t54" style="position:absolute;left:554.30px;top:68px;line-height:12px;height:12px;font-size:8.5px;font-weight:400;color:#262626;white-space:nowrap;letter-spacing:0.103px;">Orbit (rviz)</span><span id="t55" style="position:absolute;left:646.80px;top:68px;line-height:12px;height:12px;font-size:8.5px;font-weight:400;color:#2e2e2e;white-space:nowrap;letter-spacing:-0.261px;">Zero</span><span id="t56" style="position:absolute;left:539.80px;top:86px;line-height:12px;height:12px;font-size:8.5px;font-weight:700;color:#1c1c1c;white-space:nowrap;letter-spacing:0.011px;">Current View</span><span id="t57" style="position:absolute;left:604.00px;top:86px;line-height:12px;height:12px;font-size:8.5px;font-weight:700;color:#1c1c1c;white-space:nowrap;letter-spacing:0.092px;">Orbit (rviz)</span><span id="t58" style="position:absolute;left:550.90px;top:95px;line-height:12px;height:12px;font-size:8.5px;font-weight:400;color:#262626;white-space:nowrap;letter-spacing:-0.160px;">Near Clip …</span><span id="t59" style="position:absolute;left:604.00px;top:95px;line-height:12px;height:12px;font-size:8.5px;font-weight:400;color:#262626;white-space:nowrap;letter-spacing:-0.416px;">0.01</span><span id="t60" style="position:absolute;left:550.90px;top:105px;line-height:12px;height:12px;font-size:8.5px;font-weight:400;color:#262626;white-space:nowrap;letter-spacing:0.028px;">Invert Z Axis</span><span id="t61" style="position:absolute;left:550.90px;top:115px;line-height:12px;height:12px;font-size:8.5px;font-weight:400;color:#262626;white-space:nowrap;letter-spacing:-0.015px;">Target Fra…</span><span id="t62" style="position:absolute;left:604.00px;top:115px;line-height:12px;height:12px;font-size:8.5px;font-weight:400;color:#262626;white-space:nowrap;letter-spacing:-0.145px;">&lt;Fixed Frame&gt;</span><span id="t63" style="position:absolute;left:550.90px;top:124px;line-height:12px;height:12px;font-size:8.5px;font-weight:400;color:#262626;white-space:nowrap;letter-spacing:-0.040px;">Distance</span><span id="t64" style="position:absolute;left:604.00px;top:124px;line-height:12px;height:12px;font-size:8.5px;font-weight:400;color:#262626;white-space:nowrap;letter-spacing:-0.139px;">20.9942</span><span id="t65" style="position:absolute;left:550.90px;top:134px;line-height:12px;height:12px;font-size:8.5px;font-weight:400;color:#262626;white-space:nowrap;letter-spacing:-0.320px;">Focal Shap…</span><span id="t66" style="position:absolute;left:604.00px;top:134px;line-height:12px;height:12px;font-size:8.5px;font-weight:400;color:#262626;white-space:nowrap;letter-spacing:-0.249px;">0.05</span><span id="t67" style="position:absolute;left:550.90px;top:143px;line-height:12px;height:12px;font-size:8.5px;font-weight:400;color:#262626;white-space:nowrap;letter-spacing:-0.320px;">Focal Shap…</span><span id="t68" style="position:absolute;left:550.90px;top:153px;line-height:12px;height:12px;font-size:8.5px;font-weight:400;color:#262626;white-space:nowrap;letter-spacing:-0.403px;">Yaw</span><span id="t69" style="position:absolute;left:604.00px;top:153px;line-height:12px;height:12px;font-size:8.5px;font-weight:400;color:#262626;white-space:nowrap;letter-spacing:-0.200px;">1.2754</span><span id="t70" style="position:absolute;left:550.90px;top:163px;line-height:12px;height:12px;font-size:8.5px;font-weight:400;color:#262626;white-space:nowrap;letter-spacing:-0.052px;">Pitch</span><span id="t71" style="position:absolute;left:604.00px;top:163px;line-height:12px;height:12px;font-size:8.5px;font-weight:400;color:#262626;white-space:nowrap;letter-spacing:-0.093px;">0.605398</span><span id="t72" style="position:absolute;left:550.90px;top:172px;line-height:12px;height:12px;font-size:8.5px;font-weight:400;color:#262626;white-space:nowrap;letter-spacing:-0.073px;">Focal Point</span><span id="t73" style="position:absolute;left:604.00px;top:172px;line-height:12px;height:12px;font-size:8.5px;font-weight:400;color:#262626;white-space:nowrap;letter-spacing:-0.164px;">-4.9342; 1.9614; …</span><span id="t74" style="position:absolute;left:541.80px;top:426px;line-height:12px;height:12px;font-size:8.5px;font-weight:400;color:#2e2e2e;white-space:nowrap;letter-spacing:-0.525px;">Save</span><span id="t75" style="position:absolute;left:586.80px;top:426px;line-height:12px;height:12px;font-size:8.5px;font-weight:400;color:#2e2e2e;white-space:nowrap;letter-spacing:-0.131px;">Remove</span><span id="t76" style="position:absolute;left:638.20px;top:426px;line-height:12px;height:12px;font-size:8.5px;font-weight:400;color:#2e2e2e;white-space:nowrap;letter-spacing:-0.188px;">Rename</span><span id="t77" style="position:absolute;left:16.00px;top:444px;line-height:12px;height:12px;font-size:8.6px;font-weight:400;color:#1c1c20;white-space:nowrap;letter-spacing:-0.260px;">Time</span><span id="t78" style="position:absolute;left:6.80px;top:462px;line-height:12px;height:12px;font-size:8.5px;font-weight:400;color:#262626;white-space:nowrap;letter-spacing:-0.333px;">ROS Time:</span><span id="t79" style="position:absolute;left:52.20px;top:462px;line-height:12px;height:12px;font-size:8.5px;font-weight:400;color:#262626;white-space:nowrap;letter-spacing:-0.041px;">1590566987.24</span><span id="t80" style="position:absolute;left:133.60px;top:462px;line-height:12px;height:12px;font-size:8.5px;font-weight:400;color:#262626;white-space:nowrap;letter-spacing:-0.343px;">ROS Elapsed:</span><span id="t81" style="position:absolute;left:190.00px;top:462px;line-height:12px;height:12px;font-size:8.5px;font-weight:400;color:#262626;white-space:nowrap;letter-spacing:-0.120px;">184.79</span><span id="t82" style="position:absolute;left:271.70px;top:462px;line-height:12px;height:12px;font-size:8.5px;font-weight:400;color:#262626;white-space:nowrap;letter-spacing:-0.018px;">Wall Time:</span><span id="t83" style="position:absolute;left:317.40px;top:462px;line-height:12px;height:12px;font-size:8.5px;font-weight:400;color:#262626;white-space:nowrap;letter-spacing:-0.041px;">1590566987.27</span><span id="t84" style="position:absolute;left:398.50px;top:462px;line-height:12px;height:12px;font-size:8.5px;font-weight:400;color:#262626;white-space:nowrap;letter-spacing:-0.080px;">Wall Elapsed:</span><span id="t85" style="position:absolute;left:455.30px;top:462px;line-height:12px;height:12px;font-size:8.5px;font-weight:400;color:#262626;white-space:nowrap;letter-spacing:-0.080px;">184.79</span><span id="t86" style="position:absolute;left:618.40px;top:462px;line-height:12px;height:12px;font-size:8.5px;font-weight:400;color:#262626;white-space:nowrap;letter-spacing:0.081px;">Experimental</span><span id="t87" style="position:absolute;left:5.60px;top:481px;line-height:12px;height:12px;font-size:8.5px;font-weight:400;color:#2e2e2e;white-space:nowrap;letter-spacing:-0.005px;">Reset</span><span id="t88" style="position:absolute;left:35.50px;top:481px;line-height:12px;height:12px;font-size:8.5px;font-weight:700;color:#1c1c1c;white-space:nowrap;letter-spacing:0.004px;">Left-Click:</span><span id="t89" style="position:absolute;left:78.90px;top:481px;line-height:12px;height:12px;font-size:8.5px;font-weight:400;color:#262626;white-space:nowrap;letter-spacing:0.199px;">Rotate.</span><span id="t90" style="position:absolute;left:109.30px;top:481px;line-height:12px;height:12px;font-size:8.5px;font-weight:700;color:#1c1c1c;white-space:nowrap;letter-spacing:0.008px;">Middle-Click:</span><span id="t91" style="position:absolute;left:164.40px;top:481px;line-height:12px;height:12px;font-size:8.5px;font-weight:400;color:#262626;white-space:nowrap;letter-spacing:-0.078px;">Move X/Y.</span><span id="t92" style="position:absolute;left:204.80px;top:481px;line-height:12px;height:12px;font-size:8.5px;font-weight:700;color:#1c1c1c;white-space:nowrap;letter-spacing:0.010px;">Right-Click/Mouse Wheel:</span><span id="t93" style="position:absolute;left:309.60px;top:481px;line-height:12px;height:12px;font-size:8.5px;font-weight:400;color:#262626;white-space:nowrap;letter-spacing:-0.135px;">: Zoom.</span><span id="t94" style="position:absolute;left:339.70px;top:481px;line-height:12px;height:12px;font-size:8.5px;font-weight:700;color:#1c1c1c;white-space:nowrap;letter-spacing:-0.173px;">Shift</span><span id="t95" style="position:absolute;left:357.90px;top:481px;line-height:12px;height:12px;font-size:8.5px;font-weight:400;color:#262626;white-space:nowrap;letter-spacing:0.162px;">: More options.</span><span id="t96" style="position:absolute;left:642.10px;top:480px;line-height:12px;height:12px;font-size:8.5px;font-weight:400;color:#262626;white-space:nowrap;letter-spacing:0.029px;">31 fps</span></div></body></html>
